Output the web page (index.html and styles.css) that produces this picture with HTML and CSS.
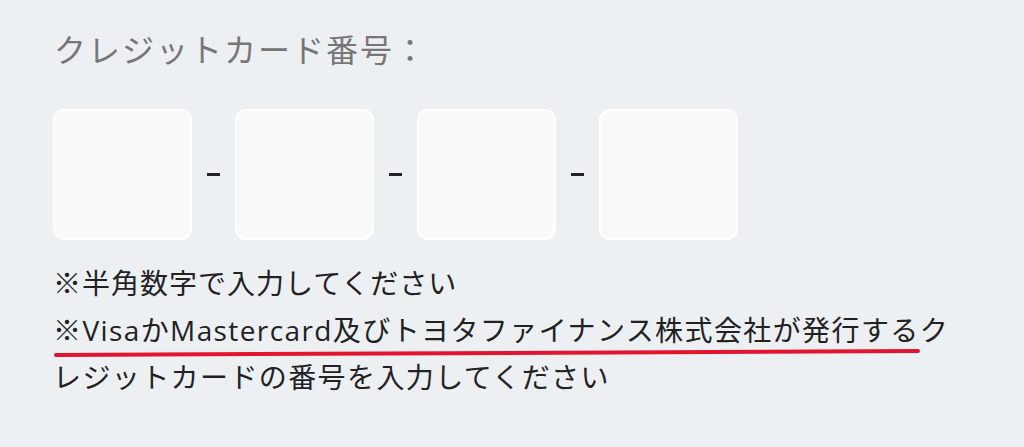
FILE: index.html
```html
<!DOCTYPE html>
<html lang="ja">
<head>
    <meta charset="UTF-8">
    <meta name="viewport" content="width=device-width, initial-scale=1.0">
    <title>クレジットカード番号</title>
    <link rel="stylesheet" href="styles.css">
</head>
<body>
    <div class="form">
        <div class="label">クレジットカード番号：</div>

        <div class="card-fields">
            <input type="text" class="card-box" inputmode="numeric" maxlength="4">
            <span class="sep"></span>
            <input type="text" class="card-box" inputmode="numeric" maxlength="4">
            <span class="sep"></span>
            <input type="text" class="card-box" inputmode="numeric" maxlength="4">
            <span class="sep"></span>
            <input type="text" class="card-box" inputmode="numeric" maxlength="4">
        </div>

        <div class="notes">
            <p>※半角数字で入力してください</p>
            <p class="wide">※VisaかMastercard及びトヨタファイナンス株式会社が発行するクレジットカードの番号を入力してください</p>
            <!-- hand-drawn red underline -->
            <svg class="mark" width="880" height="16" viewBox="0 0 880 16">
                <path d="M3 12 Q 430 10 865 8" fill="none" stroke="#e3142e" stroke-width="4" stroke-linecap="round"/>
            </svg>
        </div>
    </div>
</body>
</html>
```

FILE: styles.css
```css
body {
    margin: 0;
    background-color: #edf0f3;
    font-family: "Open Sans", "Noto Sans CJK JP", sans-serif;
}
.form {
    padding: 26px 0 0 53px;
}
.label {
    color: #777;
    font-size: 32px;
    letter-spacing: 2px;
    line-height: 48px;
    margin-left: 1px;
}
.card-fields {
    display: flex;
    align-items: center;
    margin-top: 35px;
}
.card-box {
    box-sizing: border-box;
    width: 139px;
    height: 131px;
    background-color: #f9f9f9;
    border: 2px solid #ffffff;
    border-radius: 11px;
    outline: none;
    padding: 0;
}
.sep {
    width: 13px;
    height: 3px;
    margin: 0 15px;
    background-color: #222;
}
.notes {
    position: relative;
    margin-top: 20px;
    width: 905px;
}
.notes p {
    margin: 0;
    font-size: 28px;
    letter-spacing: 1px;
    line-height: 47px;
    color: #222;
}
.notes .wide {
    letter-spacing: 1.4px;
}
.mark {
    position: absolute;
    left: 0;
    top: 83px;
}
```
